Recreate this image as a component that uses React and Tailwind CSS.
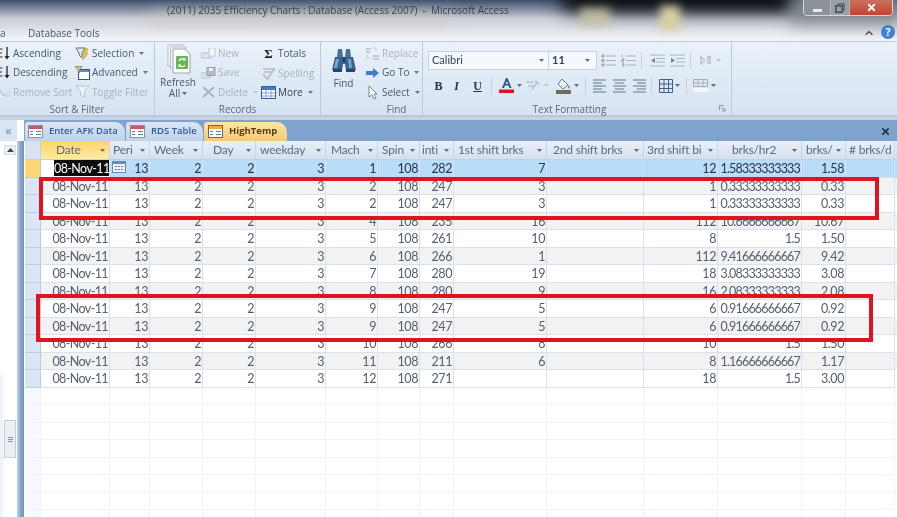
import { ChevronUp, X } from 'lucide-react'

const COLS = 'grid grid-cols-[16px_69px_40px_53px_53px_70px_52px_42px_34px_93px_97px_74px_84px_44px_49px]'

const HEADERS = [
  { label: 'Date', cls: 'pl-[15px] pr-[4px] bg-linear-to-b from-[#fbd665] to-[#fdeaa6]' },
  { label: 'Peri', cls: 'pl-[3px] pr-[4px]' },
  { label: 'Week', cls: 'pl-[4px] pr-[4px]' },
  { label: 'Day', cls: 'pl-[10px] pr-[4px]' },
  { label: 'weekday', cls: 'pl-[4px] pr-[4px]' },
  { label: 'Mach', cls: 'pl-[5px] pr-[4px]' },
  { label: 'Spin', cls: 'pl-[4px] pr-[4px]' },
  { label: 'inti', cls: 'pl-[2px] pr-[4px]' },
  { label: '1st shift brks', cls: 'pl-[4px] pr-[4px]' },
  { label: '2nd shift brks', cls: 'pl-[6px] pr-[4px]' },
  { label: '3rd shift bi', cls: 'pl-[3px] pr-[4px]' },
  { label: 'brks/hr2', cls: 'pl-[14px] pr-[4px]' },
  { label: 'brks/', cls: 'pl-[4px] pr-[4px]' },
  { label: '# brks/d', cls: 'pl-[3px]', noArrow: true },
]

const ROWS = [
  [1, 282, 7, 12, '1.58333333333', '1.58'],
  [2, 247, 3, 1, '0.33333333333', '0.33'],
  [2, 247, 3, 1, '0.33333333333', '0.33'],
  [4, 235, 16, 112, '10.6666666667', '10.67'],
  [5, 261, 10, 8, '1.5', '1.50'],
  [6, 266, 1, 112, '9.41666666667', '9.42'],
  [7, 280, 19, 18, '3.08333333333', '3.08'],
  [8, 280, 9, 16, '2.08333333333', '2.08'],
  [9, 247, 5, 6, '0.91666666667', '0.92'],
  [9, 247, 5, 6, '0.91666666667', '0.92'],
  [10, 266, 8, 10, '1.5', '1.50'],
  [11, 211, 6, 8, '1.16666666667', '1.17'],
  [12, 271, '', 18, '1.5', '3.00'],
]

// ── Small drawings ───────────────────────────────────────────
function Caret({ color = '#5f6f84' }) {
  return (
    <svg width="5" height="3" viewBox="0 0 5 3" className="shrink-0">
      <path d="M0 0h5L2.5 3z" fill={color} />
    </svg>
  )
}

function SortIcon() {
  return (
    <svg width="11" height="15" viewBox="0 0 11 15">
      <path d="M0 3h2.5M0 7h2M0 11h2.5" stroke="#7a6a5a" strokeWidth="1.6" />
      <path d="M7 1v11" stroke="#222" strokeWidth="1.3" />
      <path d="M4.5 10L7 13.5 9.5 10" fill="#222" />
    </svg>
  )
}

function RemoveSortIcon() {
  return (
    <svg width="11" height="15" viewBox="0 0 11 15" fill="none">
      <path d="M0 5l3 5 4 1" stroke="#bcc4cd" strokeWidth="1.4" />
      <circle cx="8" cy="9" r="2.5" stroke="#cbd2da" />
    </svg>
  )
}

function SelectionIcon() {
  return (
    <svg width="15" height="15" viewBox="0 0 15 15">
      <path d="M1 2h9L7 7v5L4 9V7z" fill="#dfe5ec" stroke="#66717f" />
      <path d="M10 2l3 1-2 4 2 0-5 7 1-5H7z" fill="#e7c63c" stroke="#a88b1c" strokeWidth=".5" />
    </svg>
  )
}

function AdvancedIcon() {
  return (
    <svg width="15" height="14" viewBox="0 0 15 14">
      <rect x="3.5" y="3.5" width="11" height="10" fill="#fff" stroke="#35578a" />
      <rect x="4" y="4" width="10" height="2" fill="#5f8fd0" />
      <path d="M0 .5h7L4.5 4v3L3 6V4z" fill="#e3c95c" stroke="#67717d" strokeWidth=".7" />
    </svg>
  )
}

function ToggleFilterIcon() {
  return (
    <svg width="15" height="14" viewBox="0 0 15 14">
      <path d="M1 1h13L9.5 6.5v6L5.5 10V6.5z" fill="#eef2f6" stroke="#bac2cb" />
    </svg>
  )
}

function RefreshIcon() {
  return (
    <svg width="25" height="30" viewBox="0 0 25 30">
      <rect x="1" y="1" width="15" height="21" fill="#f7f8f9" stroke="#b8bec6" />
      <rect x="3.5" y="3" width="15" height="21" fill="#f7f8f9" stroke="#b8bec6" />
      <path d="M6 5h12l5 5v19H6z" fill="#fff" stroke="#9aa4b1" />
      <rect x="9" y="12" width="12" height="13" rx="1" fill="#63b653" />
      <path d="M12 17a3.5 3.5 0 0 1 6-1M18 21a3.5 3.5 0 0 1-6 0" stroke="#fff" strokeWidth="1.4" fill="none" />
      <path d="M18.5 13.5v3h-3zM11.5 23.5v-3h3z" fill="#fff" />
    </svg>
  )
}

function NewIcon() {
  return (
    <svg width="15" height="12" viewBox="0 0 15 12">
      <path d="M0 5h10v5H0z" fill="#dfe4ea" stroke="#b9c0c9" />
      <path d="M8 0h6v8H8z" fill="#f4f6f8" stroke="#c2c8cf" />
    </svg>
  )
}

function SaveIcon() {
  return (
    <svg width="15" height="12" viewBox="0 0 15 12">
      <path d="M0 6h9v5H0z" fill="#dfe4ea" stroke="#b9c0c9" />
      <rect x="6" y="0.5" width="8" height="8" fill="#b4bdc8" stroke="#98a2ae" />
      <rect x="8" y="1" width="4" height="3" fill="#eef1f4" />
    </svg>
  )
}

function DeleteIcon() {
  return (
    <svg width="13" height="12" viewBox="0 0 13 12">
      <path d="M1 1l11 10M12 1L1 11" stroke="#a9b1bb" strokeWidth="1.8" />
    </svg>
  )
}

function SpellIcon() {
  return (
    <svg width="15" height="13" viewBox="0 0 15 13" fill="none">
      <path d="M2 2h11M3 5h8" stroke="#b6bec8" strokeWidth="1.6" />
      <path d="M2 7l4.5 5L14 1" stroke="#b6bec8" strokeWidth="1.8" />
    </svg>
  )
}

function MoreIcon() {
  return (
    <svg width="15" height="13" viewBox="0 0 15 13">
      <rect x=".5" y=".5" width="14" height="12" fill="#fff" stroke="#2f5f99" />
      <rect x="1" y="1" width="13" height="3" fill="#3f7fc6" />
      <path d="M1 7h13M1 10h13M5 4v8M10 4v8" stroke="#7aa3d2" />
    </svg>
  )
}

function BinocularsIcon() {
  return (
    <svg width="26" height="25" viewBox="0 0 26 25">
      <path d="M7 1h4l1 8H6zM15 1h4l1 8h-6z" fill="#4c6f95" />
      <path d="M4 9h8v2h2V9h8l3 13H15l-1-6h-2l-1 6H1z" fill="#38618f" />
      <path d="M2 21h9v3H2zM15 21h9v3h-9z" fill="#23466f" />
      <path d="M5 11h3l-2 9H3zM17 11h3l1 9h-3z" fill="#7da3c9" />
      <path d="M12 9h2v5h-2z" fill="#1f3a5c" />
    </svg>
  )
}

function ReplaceIcon() {
  return (
    <svg width="15" height="14" viewBox="0 0 15 14" fill="none">
      <path d="M1 2h5M1 5h4M8 9h6M8 12h6" stroke="#b5bdc7" strokeWidth="1.5" />
      <path d="M2 8v3h3M8 1h3v3" stroke="#c3cad2" />
    </svg>
  )
}

function GoToIcon() {
  return (
    <svg width="13" height="10" viewBox="0 0 13 10">
      <path d="M0 3h7V0l6 5-6 5V7H0z" fill="#3f7dd0" />
    </svg>
  )
}

function SelectIcon() {
  return (
    <svg width="12" height="15" viewBox="0 0 12 15">
      <path d="M2 1v11l3-2 2 4 2-1-2-4h3z" fill="#fff" stroke="#7d8693" />
    </svg>
  )
}

function ListIcon({ numbered }) {
  return (
    <svg width="15" height="13" viewBox="0 0 15 13" fill="none">
      <path d="M5 2h10M5 6.5h10M5 11h10" stroke="#a8b4c2" strokeWidth="1.2" />
      <path d={numbered ? 'M1 1v2M1 5h2v1H1v2h2M1 10h2v2H1' : 'M1 1h2v2H1zM1 5.5h2v2H1zM1 10h2v2H1z'} stroke="#8f9cac" />
    </svg>
  )
}

function IndentIcon({ flip }) {
  return (
    <svg width="15" height="13" viewBox="0 0 15 13" fill="none">
      <path d="M0 1h15M6 4.5h9M6 8h9M0 12h15" stroke="#a8b4c2" strokeWidth="1.2" />
      <path d={flip ? 'M5 4L1 6.5 5 9z' : 'M1 4l4 2.5L1 9z'} fill="#6b86a8" />
    </svg>
  )
}

function RtlIcon() {
  return (
    <svg width="11" height="9" viewBox="0 0 11 9">
      <path d="M1 0v9M1 1l4 3.5L1 8" stroke="#a5afbb" fill="none" />
      <path d="M7 1h4M8 1v7M10 1v7" stroke="#a5afbb" />
    </svg>
  )
}

function FontColorIcon() {
  return (
    <svg width="15" height="15" viewBox="0 0 15 15">
      <path d="M3 10L7 0h1.5l4 10H10.5L9.5 7.5H6L5 10zM6.6 6h2.4L7.8 3z" fill="#2f4f86" />
      <rect x="0" y="11.5" width="15" height="3.5" fill="#e2131c" />
    </svg>
  )
}

function HighlightIcon() {
  return (
    <svg width="14" height="11" viewBox="0 0 14 11" fill="none">
      <path d="M0 2h7M2 6h5" stroke="#b9c1cb" strokeWidth="1.4" />
      <path d="M6 9l6-7M9 1l4 3" stroke="#b9c1cb" strokeWidth="1.6" />
    </svg>
  )
}

function FillIcon() {
  return (
    <svg width="15" height="16" viewBox="0 0 15 16">
      <path d="M6 1l6 6-5 4-5-5z" fill="#eef3f8" stroke="#567ba6" />
      <path d="M12 7c2 2 2 3 1.5 3.5S12 10 12 7z" fill="#3f78bf" />
      <rect x="0" y="12" width="15" height="4" fill="#716f5c" />
    </svg>
  )
}

function AlignIcon({ kind }) {
  const d = {
    left: 'M0 1h13M0 4h9M0 7h13M0 10h9M0 13h13',
    center: 'M0 1h13M2 4h9M0 7h13M2 10h9M0 13h13',
    right: 'M0 1h13M4 4h9M0 7h13M4 10h9M0 13h13',
  }[kind]
  return (
    <svg width="13" height="14" viewBox="0 0 13 14">
      <path d={d} stroke="#8b9bb0" strokeWidth="1.3" />
    </svg>
  )
}

function GridIcon() {
  return (
    <svg width="14" height="14" viewBox="0 0 14 14" fill="none">
      <path d="M.5.5h13v13H.5zM.5 5h13M.5 9.5h13M5 .5v13M9.5.5v13" stroke="#3f5f86" />
    </svg>
  )
}

function GridlineIcon() {
  return (
    <svg width="15" height="13" viewBox="0 0 15 13" fill="none">
      <path d="M.5.5h14v7H.5zM.5 4h14M5 .5v7M10 .5v7" stroke="#a3afbd" />
      <rect x="0" y="9" width="15" height="4" fill="#f4f6f9" />
    </svg>
  )
}

function CalendarIcon() {
  return (
    <svg width="14" height="12" viewBox="0 0 14 12">
      <rect x=".5" y=".5" width="13" height="11" fill="#eef3fb" stroke="#6c88b5" />
      <rect x="1" y="1" width="12" height="2" fill="#6c88b5" />
      <path d="M3 5h2v1H3zM6 5h2v1H6zM9 5h2v1H9zM3 8h2v1H3zM6 8h2v1H6z" fill="#5a76a3" />
      <path d="M9 8h2v1H9z" fill="#d2584f" />
    </svg>
  )
}

function TableTabIcon({ query }) {
  return (
    <svg width="15" height="13" viewBox="0 0 15 13">
      <rect x=".5" y=".5" width="14" height="12" fill="#fff" stroke={query ? '#7b6a3d' : '#8b8fa0'} />
      <rect x="1" y="1" width="13" height="3" fill={query ? '#e6b04c' : '#c9586a'} />
      <path d="M2 6h3v1H2zM2 9h3v1H2zM8 6h5v1H8zM8 9h5v1H8z" fill="#5b7ba8" />
    </svg>
  )
}

function RestoreIcon() {
  return (
    <svg width="10" height="10" viewBox="0 0 10 10" fill="none">
      <path d="M3 2V.8h6.2V7H8" stroke="#3f464d" />
      <rect x=".8" y="2.8" width="6.4" height="6.4" stroke="#3f464d" strokeWidth="1.4" />
    </svg>
  )
}

// ── Ribbon pieces ────────────────────────────────────────────
function Item({ icon, label, off, caret, iconBox = 'w-[15px]', strong }) {
  const color = off ? 'text-[#a9b3be]' : strong ? 'text-[#2f3f55]' : 'text-[#47566b]'
  return (
    <div className={`flex items-center h-[19.5px] gap-[2px] whitespace-nowrap ${color}`}>
      <span className={`flex items-center justify-center shrink-0 ${iconBox}`}>{icon}</span>
      <span>{label}</span>
      {caret && <span className="ml-[3px]"><Caret color={off ? '#c0c7d0' : '#6a7889'} /></span>}
    </div>
  )
}

function Group({ label, width, children, launcher }) {
  return (
    <div className={`relative flex flex-col shrink-0 border-r border-[#bccbdc] ${width}`}>
      <div className="h-[60px] flex pt-[2px]">{children}</div>
      <div className="h-[13px] text-center text-[#5a687b] leading-[15px] whitespace-nowrap">{label}</div>
      {launcher && (
        <svg width="7" height="7" viewBox="0 0 7 7" className="absolute right-[5px] bottom-[3px]">
          <path d="M0 .5h5M.5 0v5M2 2l4 4M3 6h3V3" stroke="#8d9bac" fill="none" />
        </svg>
      )}
    </div>
  )
}

function Sep({ h = 'h-[17px]' }) {
  return <div className={`w-px bg-[#c5d1df] ${h}`} />
}

function Ribbon() {
  return (
    <div className="flex h-[76px] bg-linear-to-b from-[#eaf1f9] to-[#d6e3f2] border-t border-[#c2ccd8] border-b-2 border-b-[#bcc8d6] text-[10px]">
      <Group label="Sort & Filter" width="w-[155px]">
        <div className="flex flex-col w-[75px]">
          <Item icon={<SortIcon />} label="Ascending" iconBox="w-[11px]" />
          <Item icon={<SortIcon />} label="Descending" iconBox="w-[11px]" />
          <Item icon={<RemoveSortIcon />} label="Remove Sort" off iconBox="w-[11px]" />
        </div>
        <div className="flex flex-col">
          <Item icon={<SelectionIcon />} label="Selection" caret />
          <Item icon={<AdvancedIcon />} label="Advanced" caret />
          <Item icon={<ToggleFilterIcon />} label="Toggle Filter" off />
        </div>
      </Group>

      <Group label="Records" width="w-[166px]">
        <div className="flex flex-col items-center w-[46px] text-[#47566b] leading-[11px]">
          <span className="mb-[3px] ml-[2px] h-[30px]"><RefreshIcon /></span>
          <span className="h-[11px]">Refresh</span>
          <span className="flex items-center gap-[2px] h-[11px]">All <Caret /></span>
        </div>
        <div className="flex flex-col w-[60px]">
          <Item icon={<NewIcon />} label="New" off />
          <Item icon={<SaveIcon />} label="Save" off />
          <Item icon={<DeleteIcon />} label="Delete" off caret />
        </div>
        <div className="flex flex-col">
          <Item icon={<span className="font-['Liberation_Serif',serif] text-[13px] font-bold text-[#222]">Σ</span>} label="Totals" />
          <Item icon={<SpellIcon />} label="Spelling" off />
          <Item icon={<MoreIcon />} label="More" caret strong />
        </div>
      </Group>

      <Group label={<span className="pl-[50px]">Find</span>} width="w-[102px]">
        <div className="flex flex-col items-center w-[44px] pl-[1px] text-[#47566b]">
          <span className="mt-[4px] mb-[4px] h-[25px]"><BinocularsIcon /></span>
          <span className="leading-[13px]">Find</span>
        </div>
        <div className="flex flex-col">
          <Item icon={<ReplaceIcon />} label="Replace" off />
          <Item icon={<GoToIcon />} label="Go To" caret />
          <Item icon={<SelectIcon />} label="Select" caret />
        </div>
      </Group>

      <Group label={<span className="pr-[15px]">Text Formatting</span>} width="w-[309px]" launcher>
        <div className="flex flex-col pl-[5px] pt-[7px] gap-[6px]">
          <div className="flex items-center h-[19px]">
            <div className="flex items-center justify-between w-[121px] h-[19px] px-[3px] pr-[4px] bg-[#f6f9fc] border border-[#c6d2e0] text-[#33435a] font-['Lato',sans-serif] text-[11px]">
              Calibri <Caret />
            </div>
            <div className="flex items-center justify-between w-[48px] h-[19px] px-[3px] pr-[6px] bg-[#f6f9fc] border border-l-0 border-[#c6d2e0] text-[#33435a] font-['Lato',sans-serif] text-[11px] font-bold">
              11 <Caret />
            </div>
            <div className="flex items-center gap-[5px] ml-[4px]">
              <ListIcon />
              <ListIcon numbered />
              <Sep />
              <span className="ml-[3px]"><IndentIcon flip /></span>
              <IndentIcon />
              <Sep />
              <span className="flex items-center gap-[5px] ml-[4px]"><RtlIcon /><Caret color="#c0c7d0" /></span>
            </div>
          </div>
          <div className="flex items-center h-[19px]">
            <span className="w-[11px] ml-[5px] font-['Liberation_Serif',serif] font-bold text-[12px] text-[#2b3442] text-center">B</span>
            <span className="w-[11px] ml-[7px] font-['Liberation_Serif',serif] italic font-bold text-[12px] text-[#2b3442] text-center">I</span>
            <span className="w-[11px] ml-[10px] font-['Liberation_Serif',serif] underline font-bold text-[12px] text-[#2b3442] text-center">U</span>
            <span className="ml-[8px]"><Sep /></span>
            <span className="ml-[7px]"><FontColorIcon /></span>
            <span className="ml-[3px]"><Caret /></span>
            <span className="ml-[4px]"><HighlightIcon /></span>
            <span className="ml-[4px]"><Caret color="#c0c7d0" /></span>
            <span className="ml-[7px]"><FillIcon /></span>
            <span className="ml-[3px]"><Caret /></span>
            <span className="ml-[6px]"><Sep /></span>
            <span className="flex items-center gap-[7px] ml-[7px]">
              <AlignIcon kind="left" />
              <AlignIcon kind="center" />
              <AlignIcon kind="right" />
            </span>
            <span className="ml-[5px]"><Sep /></span>
            <span className="ml-[7px]"><GridIcon /></span>
            <span className="ml-[2px]"><Caret /></span>
            <span className="ml-[6px]"><Sep /></span>
            <span className="ml-[6px]"><GridlineIcon /></span>
            <span className="ml-[3px]"><Caret /></span>
          </div>
        </div>
      </Group>
      <div className="flex-1" />
    </div>
  )
}

function TitleBar() {
  return (
    <div className="relative h-[41px] overflow-hidden bg-linear-to-b from-[#3f4f6b] via-[#c9ced6] via-45% to-[#f5f7f9]">
      {/* blurred desktop showing through the glass */}
      <div className="absolute left-[560px] top-[-14px] w-[240px] h-[26px] rounded-full bg-[#0a0a0d] blur-[9px]" />
      <div className="absolute left-[790px] top-[-6px] w-[110px] h-[30px] bg-[#7d8489] blur-[8px]" />
      <div className="absolute left-[150px] top-[12px] w-[300px] h-[12px] bg-[#d3c7bf] opacity-60 blur-[8px]" />
      <div className="absolute left-[580px] top-[8px] w-[30px] h-[18px] bg-[#ccc7a4] opacity-80 blur-[5px]" />
      <div className="absolute left-[660px] top-[6px] w-[20px] h-[24px] bg-[#d8d0a0] blur-[5px]" />

      <div className="relative h-[25px] pl-[167px] pt-[3px] text-[10px] text-[#39414d] whitespace-pre">
        (2011) 2035 Efficiency Charts : Database (Access 2007)  -  Microsoft Access
      </div>
      <div className="relative flex items-center h-[16px] text-[10px] text-[#47566b]">
        <span className="w-[28px]">a</span>
        <span>Database Tools</span>
        <div className="flex-1" />
        <ChevronUp size={12} strokeWidth={3} className="text-[#555] mr-[6px]" />
        <span className="flex items-center justify-center w-[14px] h-[14px] mr-[2px] mb-[2px] rounded-full bg-[#3f7fd6] text-white text-[11px] font-bold">?</span>
      </div>

      {/* window controls */}
      <div className="absolute right-[4px] top-[-1px] flex h-[17px] w-[90px] border border-[#d5d8dc] rounded-b-[4px] overflow-hidden">
        <div className="flex items-center justify-center w-[27px] bg-[#8b9298] border-r border-[#b0b5ba]">
          <span className="w-[9px] h-[3px] mt-[5px] bg-[#e8eaec]" />
        </div>
        <div className="flex items-center justify-center w-[19px] bg-[#9aa1a6] border-r border-[#b0b5ba]">
          <RestoreIcon />
        </div>
        <div className="flex flex-1 items-center justify-center bg-linear-to-b from-[#c9705f] to-[#c8402c]">
          <X size={11} strokeWidth={4} className="text-white" />
        </div>
      </div>
    </div>
  )
}

function TabStrip() {
  return (
    <div className="flex items-end h-[21px] pl-[1px] bg-[#7fa3cf] pt-[2px] gap-[1px]">
      <div className="flex items-center gap-[6px] w-[100px] h-[19px] pl-[3px] rounded-t-[3px] rounded-tr-[10px] bg-linear-to-b from-[#d9e6f5] to-[#bed2ea] text-[#2f5c93] text-[9.5px] font-semibold whitespace-nowrap">
        <TableTabIcon /> Enter AFK Data
      </div>
      <div className="flex items-center gap-[6px] w-[77px] h-[19px] pl-[4px] rounded-t-[3px] rounded-tr-[10px] bg-linear-to-b from-[#d9e6f5] to-[#bed2ea] text-[#2f5c93] text-[9.5px] font-semibold whitespace-nowrap">
        <TableTabIcon /> RDS Table
      </div>
      <div className="flex items-center gap-[6px] w-[83px] h-[19px] pl-[4px] rounded-t-[3px] rounded-tr-[10px] bg-linear-to-b from-[#fbe6a6] to-[#f4c877] text-[#5a3d10] text-[9.5px] font-bold whitespace-nowrap">
        <TableTabIcon query /> HighTemp
      </div>
      <div className="flex-1" />
      <X size={11} strokeWidth={3.5} className="mb-[4px] mr-[6px] text-[#1f2a3a]" />
    </div>
  )
}

function HeaderRow() {
  return (
    <div className={`${COLS} h-[19px] bg-linear-to-b from-[#e9eff8] to-[#d5e0ee] text-[12px] tracking-[-0.2px] text-[#5b6b80] border-b border-[#c3d0e0]`}>
      <div className="bg-[#d8e3f1] border-r border-[#c3d0e0]" />
      {HEADERS.map(h => (
        <div key={h.label} className={`flex items-center justify-between overflow-hidden border-r border-[#c9d5e4] whitespace-nowrap ${h.cls}`}>
          <span className="overflow-hidden">{h.label}</span>
          {!h.noArrow && <Caret />}
        </div>
      ))}
    </div>
  )
}

function DataRow({ row, index }) {
  const [mach, inti, first, third, hr2, brks] = row
  const selected = index === 0
  const bg = selected ? 'bg-[#b9dcf9] text-[#2b3442]' : index % 2 === 1 ? 'bg-[#f2f2f2] text-[#55606e]' : 'bg-white text-[#55606e]'
  const cell = 'pr-[1px] text-right border-r border-b border-[#d8e2ef] overflow-hidden whitespace-nowrap leading-[18px]'
  return (
    <div className={`${COLS} h-[17.5px] ${bg}`}>
      <div className={`border-r border-b border-[#bccde2] ${selected ? 'bg-[#fbd872]' : 'bg-[#d8e6f6]'}`} />
      {selected ? (
        <div className="flex border-r border-b border-[#d8e2ef] bg-white leading-[17px]">
          <span className="ml-[13px] w-[55px] h-[16px] bg-[#0c0c0c] text-white whitespace-nowrap tracking-[-0.6px]">08-Nov-11</span>
        </div>
      ) : (
        <div className={`${cell} tracking-[-0.6px]`}>08-Nov-11</div>
      )}
      <div className={`${cell} relative`}>
        {selected && <span className="absolute left-[2px] top-[1px]"><CalendarIcon /></span>}
        13
      </div>
      <div className={cell}>2</div>
      <div className={cell}>2</div>
      <div className={cell}>3</div>
      <div className={cell}>{mach}</div>
      <div className={cell}>108</div>
      <div className={cell}>{inti}</div>
      <div className={cell}>{first}</div>
      <div className={cell} />
      <div className={cell}>{third}</div>
      <div className={`${cell} tracking-[-0.8px]`}>{hr2}</div>
      <div className={cell}>{brks}</div>
      <div className={cell} />
    </div>
  )
}

function EmptyRow() {
  return (
    <div className={`${COLS} h-[17.5px] bg-white`}>
      {Array(15).fill(0).map((_, i) => (
        <div key={i} className={`border-r border-b border-[#f0f3f8] ${i === 0 ? 'bg-[#f6f9fd]' : ''}`} />
      ))}
    </div>
  )
}

function NavPane() {
  return (
    <div className="flex flex-col w-[24px] shrink-0">
      <div className="flex items-center justify-center w-[17px] h-[21px] bg-[#d9e5f3] text-[#6382a8] text-[12px]">«</div>
      <div className="flex flex-1">
        <div className="flex w-[17px] bg-white">
          <div className="flex flex-col justify-end w-[4px]">
            <div className="h-[142px] w-[3px] bg-[#edf3fb]" />
          </div>
          <div className="flex flex-col flex-1 pt-[4px] pr-[1px]">
            <div className="flex items-center justify-center h-[10px] bg-[#eef1f5] border border-[#d5dbe2]">
              <svg width="7" height="4" viewBox="0 0 7 4"><path d="M0 4l3.5-4L7 4z" fill="#3f4650" /></svg>
            </div>
            <div className="flex flex-col items-center justify-center gap-[1px] h-[38px] mt-[265px] bg-[#eceff2] border border-[#c8ced6]">
              <span className="w-[5px] h-px bg-[#8a929c]" />
              <span className="w-[5px] h-px bg-[#8a929c]" />
              <span className="w-[5px] h-px bg-[#8a929c]" />
            </div>
          </div>
        </div>
        <div className="w-[7px] bg-linear-to-r from-[#c4d3e6] via-[#8aa6cc] to-[#7092bf]" />
      </div>
    </div>
  )
}

export default function App() {
  return (
    <div className="relative w-[897px] h-[517px] overflow-hidden bg-white font-['Open_Sans',sans-serif] blur-[0.4px]">
      <TitleBar />
      <Ribbon />
      <div className="h-[3px] bg-[#c9d3df]" />
      <div className="flex h-[397px] overflow-hidden">
        <NavPane />
        <div className="flex-1 flex flex-col min-w-0">
          <TabStrip />
          <div className="overflow-hidden font-['Lato',sans-serif] text-[12.5px] tracking-[-0.4px] pl-[1px]">
            <HeaderRow />
            {ROWS.map((r, i) => <DataRow key={i} row={r} index={i} />)}
            {Array(8).fill(0).map((_, i) => <EmptyRow key={i} />)}
          </div>
        </div>
      </div>

      {/* red highlight boxes drawn over the screenshot */}
      <div className="absolute left-[39px] top-[177px] w-[840px] h-[43px] border-4 border-[#e0141f]" />
      <div className="absolute left-[36px] top-[294px] w-[837px] h-[48px] border-4 border-[#e0141f]" />
    </div>
  )
}
